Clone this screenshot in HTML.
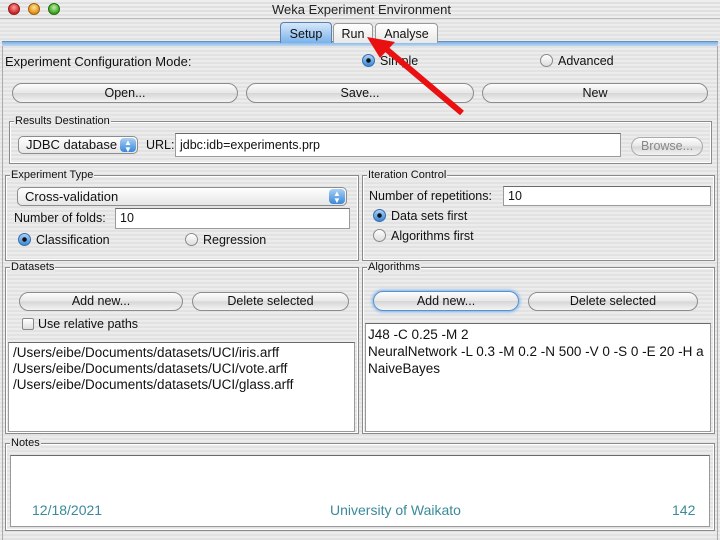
<!DOCTYPE html>
<html><head><meta charset="utf-8"><style>
*{margin:0;padding:0;box-sizing:border-box}
body{width:720px;height:540px;overflow:hidden;position:relative;font-family:"Liberation Sans","DejaVu Sans",sans-serif;font-size:12.5px;color:#111;
background:repeating-linear-gradient(#ececec 0 2px,#e2e2e2 2px 4px);}
.a{position:absolute}
.t{position:absolute;white-space:nowrap}
.box{position:absolute;border:1px solid #8a8a8a;box-shadow:inset 0 0 0 1px #fff}
.lg{position:absolute;top:-7px;left:4px;font-size:11px;padding:0 1px;background:#e8e8e8;color:#111}
.btn{position:absolute;border:1px solid #8c8c8c;border-radius:11px;background:linear-gradient(#fdfdfd,#e6e6e6 50%,#d6d6d6 51%,#f4f4f4);text-align:center;font-size:12.5px;line-height:18px}
.fld{position:absolute;background:#fff;border:1px solid #9a9a9a;border-top-color:#6a6a6a;font-size:12.5px;padding-left:4px}
.rad{position:absolute;width:13px;height:13px;border-radius:50%;border:1px solid #8a8a8a;background:linear-gradient(#fff,#ddd)}
.rad.on{background:radial-gradient(circle,#111 0 2px,transparent 2.5px),linear-gradient(#a8d0f6,#3a88d8);border-color:#3b6ea8}
.combo{position:absolute;border:1px solid #8c8c8c;border-radius:5px;background:linear-gradient(#fff,#e6e6e6);font-size:13px;padding-left:7px}
.arr{position:absolute;right:1px;top:1px;bottom:1px;width:16px;border-radius:4px;background:linear-gradient(#a8d0f6,#3a88d8);color:#fff;font-size:8px;text-align:center;line-height:7px;padding-top:1px}
</style></head><body>
<div class="a" style="left:0;top:0;width:720px;height:19px;background:repeating-linear-gradient(#eeeeee 0 2px,#e0e0e0 2px 4px);border-bottom:1px solid #bbb"></div>
<div class="a" style="left:8px;top:3px;width:12px;height:12px;border-radius:50%;background:radial-gradient(circle at 50% 35%,#f9a0a0,#d02020 70%);border:1px solid #902020"></div>
<div class="a" style="left:28px;top:3px;width:12px;height:12px;border-radius:50%;background:radial-gradient(circle at 50% 35%,#fde39a,#e09010 70%);border:1px solid #a06010"></div>
<div class="a" style="left:48px;top:3px;width:12px;height:12px;border-radius:50%;background:radial-gradient(circle at 50% 35%,#bff0a0,#3aa020 70%);border:1px solid #207010"></div>
<div class="t" style="left:272px;top:2px;font-size:13px;color:#222">Weka Experiment Environment</div>
<div class="a" style="left:2px;top:41px;width:716px;height:5px;background:linear-gradient(#7fb2e8,#bcd8f4);border-top:1px solid #6a8fbf"></div>
<div class="a" style="left:2px;top:46px;width:716px;height:494px;border-left:1px solid #aaa;border-right:1px solid #aaa"></div>
<div class="a" style="left:280px;top:22px;width:52px;height:21px;border:1px solid #5a7fb0;border-bottom:none;border-radius:4px 4px 0 0;background:linear-gradient(#d6e8fb,#7ab2ea);text-align:center;font-size:12.5px;line-height:22px">Setup</div>
<div class="a" style="left:333px;top:23px;width:40px;height:20px;border:1px solid #999;border-bottom:none;border-radius:4px 4px 0 0;background:linear-gradient(#fff,#e8e8e8);text-align:center;font-size:12.5px;line-height:20px">Run</div>
<div class="a" style="left:375px;top:23px;width:63px;height:20px;border:1px solid #999;border-bottom:none;border-radius:4px 4px 0 0;background:linear-gradient(#fff,#e8e8e8);text-align:center;font-size:12.5px;line-height:20px">Analyse</div>

<div class="t" style="left:5px;top:54px;font-size:13px">Experiment Configuration Mode:</div>
<div class="rad on" style="left:362px;top:54px"></div><div class="t" style="left:380px;top:54px">Simple</div>
<div class="rad" style="left:540px;top:54px"></div><div class="t" style="left:558px;top:54px">Advanced</div>

<div class="btn" style="left:12px;top:83px;width:226px;height:20px">Open...</div>
<div class="btn" style="left:246px;top:83px;width:228px;height:20px">Save...</div>
<div class="btn" style="left:482px;top:83px;width:226px;height:20px">New</div>

<div class="box" style="left:9px;top:121px;width:703px;height:43px"><span class="lg">Results Destination</span></div>
<div class="combo" style="left:18px;top:136px;width:120px;height:18px;line-height:16px">JDBC database<div class="arr">▲<br>▼</div></div>
<div class="t" style="left:146px;top:138px">URL:</div>
<div class="fld" style="left:175px;top:133px;width:446px;height:24px;line-height:22px">jdbc:idb=experiments.prp</div>
<div class="btn" style="left:631px;top:137px;width:72px;height:19px;color:#888;line-height:17px;border-color:#aaa">Browse...</div>

<div class="box" style="left:5px;top:175px;width:354px;height:86px"><span class="lg">Experiment Type</span></div>
<div class="combo" style="left:17px;top:187px;width:330px;height:19px;line-height:17px">Cross-validation<div class="arr">▲<br>▼</div></div>
<div class="t" style="left:14px;top:211px">Number of folds:</div>
<div class="fld" style="left:115px;top:208px;width:235px;height:21px;line-height:19px">10</div>
<div class="rad on" style="left:18px;top:233px"></div><div class="t" style="left:36px;top:233px">Classification</div>
<div class="rad" style="left:185px;top:233px"></div><div class="t" style="left:203px;top:233px">Regression</div>

<div class="box" style="left:362px;top:175px;width:353px;height:86px"><span class="lg">Iteration Control</span></div>
<div class="t" style="left:369px;top:189px">Number of repetitions:</div>
<div class="fld" style="left:503px;top:186px;width:208px;height:20px;line-height:18px">10</div>
<div class="rad on" style="left:373px;top:209px"></div><div class="t" style="left:391px;top:209px">Data sets first</div>
<div class="rad" style="left:373px;top:229px"></div><div class="t" style="left:391px;top:229px">Algorithms first</div>

<div class="box" style="left:5px;top:267px;width:354px;height:167px"><span class="lg">Datasets</span></div>
<div class="btn" style="left:19px;top:292px;width:164px;height:19px;line-height:17px">Add new...</div>
<div class="btn" style="left:192px;top:292px;width:157px;height:19px;line-height:17px">Delete selected</div>
<div class="a" style="left:22px;top:318px;width:12px;height:12px;border:1px solid #888;border-radius:2px;background:linear-gradient(#fff,#ddd)"></div>
<div class="t" style="left:38px;top:317px">Use relative paths</div>
<div class="fld" style="left:8px;top:342px;width:347px;height:90px;padding-top:2px;line-height:16px;font-size:13.5px">/Users/eibe/Documents/datasets/UCI/iris.arff<br>/Users/eibe/Documents/datasets/UCI/vote.arff<br>/Users/eibe/Documents/datasets/UCI/glass.arff</div>

<div class="box" style="left:362px;top:267px;width:353px;height:167px"><span class="lg">Algorithms</span></div>
<div class="btn" style="left:373px;top:291px;width:146px;height:20px;line-height:18px;border-color:#5a8fd0;box-shadow:0 0 3px 1px #7ab2ea">Add new...</div>
<div class="btn" style="left:528px;top:292px;width:170px;height:19px;line-height:17px">Delete selected</div>
<div class="fld" style="left:365px;top:323px;width:346px;height:109px;padding-top:2px;padding-left:2px;line-height:17px;overflow:hidden;white-space:nowrap;font-size:13.5px">J48 -C 0.25 -M 2<br>NeuralNetwork -L 0.3 -M 0.2 -N 500 -V 0 -S 0 -E 20 -H a<br>NaiveBayes</div>

<div class="box" style="left:5px;top:443px;width:710px;height:88px"><span class="lg">Notes</span></div>
<div class="fld" style="left:10px;top:455px;width:700px;height:72px"></div>
<div class="t" style="left:32px;top:502px;font-size:14px;color:#3a8a9a">12/18/2021</div>
<div class="t" style="left:330px;top:502px;font-size:14px;color:#3a8a9a">University of Waikato</div>
<div class="t" style="left:672px;top:502px;font-size:14px;color:#3a8a9a">142</div>

<svg class="a" style="left:0;top:0" width="720" height="540"><line x1="462" y1="113" x2="385" y2="48" stroke="#e81010" stroke-width="6"/><polygon points="367,37 395,42 380,58" fill="#e81010"/></svg>
</body></html>
